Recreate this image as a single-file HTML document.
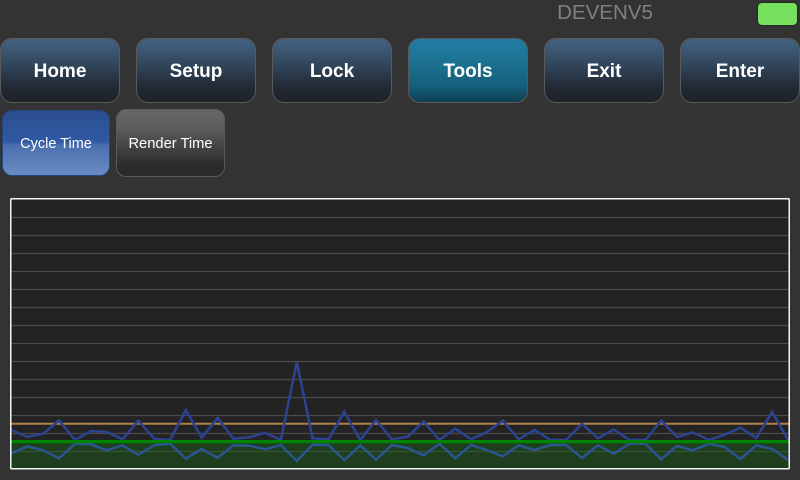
<!DOCTYPE html>
<html>
<head>
<meta charset="utf-8">
<style>
html,body{margin:0;padding:0;background:#333;}
body{width:800px;height:480px;position:relative;overflow:hidden;font-family:"Liberation Sans",sans-serif;}
.b{position:absolute;top:38px;width:120px;height:65px;box-sizing:border-box;border:1px solid #5a5a5a;border-radius:12px;
background:linear-gradient(#42617f 0%,#3f5c79 12%,#1f2630 82%,#1f2229 100%);color:#fff;font-weight:bold;font-size:19px;line-height:65px;text-align:center;}
.t{background:linear-gradient(#217ca3 0%,#1f7698 25%,#15607c 75%,#0f3f52 100%);}
.s{position:absolute;box-sizing:border-box;border-radius:10px;color:#fff;text-align:center;}
.title{position:absolute;left:505px;width:200px;top:0;text-align:center;font-size:20.5px;line-height:26px;color:#808080;}
.led{position:absolute;left:757px;top:2px;width:41px;height:24px;box-sizing:border-box;background:#77e05f;border:1px solid #272727;border-radius:5px;}
svg{position:absolute;left:0;top:0;}
</style>
</head>
<body>
<div class="title">DEVENV5</div>
<div class="led"></div>
<div class="b" style="left:0">Home</div>
<div class="b" style="left:136px">Setup</div>
<div class="b" style="left:272px">Lock</div>
<div class="b t" style="left:408px">Tools</div>
<div class="b" style="left:544px">Exit</div>
<div class="b" style="left:680px">Enter</div>
<div class="s" style="left:2px;top:110px;width:108px;height:66px;line-height:66px;font-size:14.500px;border:1px solid #24467f;background:linear-gradient(#2b4e8f 0%,#3059a2 48%,#4c70af 54%,#6a8bc3 100%);">Cycle Time</div>
<div class="s" style="left:116px;top:109px;width:109px;height:68px;line-height:68px;font-size:14.700px;border:1px solid #5a5a5a;background:linear-gradient(#666 0%,#5e5e5e 25%,#2b2b2b 85%,#2a2a2a 100%);">Render Time</div>
<svg width="800" height="480" viewBox="0 0 800 480">
<rect x="11" y="199" width="778" height="269.500" fill="#232323"/>
<g stroke="#4a4a4a" stroke-width="1.200">
<path d="M11 217.500H789M11 235.500H789M11 253.500H789M11 271.500H789M11 289.500H789M11 307.500H789M11 325.500H789M11 343.500H789M11 361.500H789M11 379.500H789M11 397.500H789M11 415.500H789M11 433.500H789M11 451.500H789"/>
</g>
<rect x="11" y="441" width="778" height="27.500" fill="#196419" fill-opacity="0.42"/>
<path d="M11 423.700H789" stroke="#b08048" stroke-width="2" fill="none"/>
<path fill="none" stroke="#2b4390" stroke-width="2.500" stroke-linejoin="miter" d="M11.500 430L27.400 437L43.200 433.700L59 420.300L75 440L90.800 431L106.600 432L122.500 439.300L138.300 420.700L154.200 438.700L170 440L185.900 410L201.700 437.700L217.600 418L233.400 438.700L249.300 437.300L265.100 432.700L280.900 440L296.800 362L312.600 438.300L328.500 439.300L344.300 411.700L360.200 440L376 420L391.900 439.300L407.700 436.700L423.600 421.300L439.400 440L455.200 428.700L471.100 439.300L486.900 432L502.800 420.700L518.600 439.300L534.500 430L550.300 440L566.200 440L582 423.700L597.900 438.300L613.700 429.300L629.500 440L645.400 440L661.200 420.700L677.100 437L692.900 432.300L708.800 440L724.600 434.700L740.500 427.700L756.300 438L772.200 412L788 440"/>
<path fill="none" stroke="#2b5490" stroke-width="2.500" d="M11.500 453.300L27.400 446.300L43.200 450.300L59 458.300L75 443.700L90.800 444.300L106.600 450.300L122.500 445.300L138.300 454.700L154.200 445.300L170 443.700L185.900 458.700L201.700 449L217.600 457.700L233.400 445.300L249.300 445.700L265.100 449.300L280.900 445L296.800 461L312.600 444.700L328.500 445L344.300 460.300L360.200 445.300L376 459.700L391.900 445L407.700 448L423.600 455.300L439.400 443.700L455.200 458.300L471.100 445L486.900 450L502.800 456.300L518.600 445.300L534.500 450L550.300 445L566.200 445L582 458L597.900 445.300L613.700 453.700L629.500 443.700L645.400 443.700L661.200 459.300L677.100 446L692.900 450.300L708.800 443.700L724.600 447L740.500 459L756.300 445.300L772.200 449L788 459.700"/>
<path d="M11 441.600H789" stroke="#008500" stroke-width="3.200" fill="none"/>
<rect x="10.750" y="198.750" width="778.500" height="270" rx="1" fill="none" stroke="#f4f4f4" stroke-width="1.500"/>
</svg>
</body>
</html>
